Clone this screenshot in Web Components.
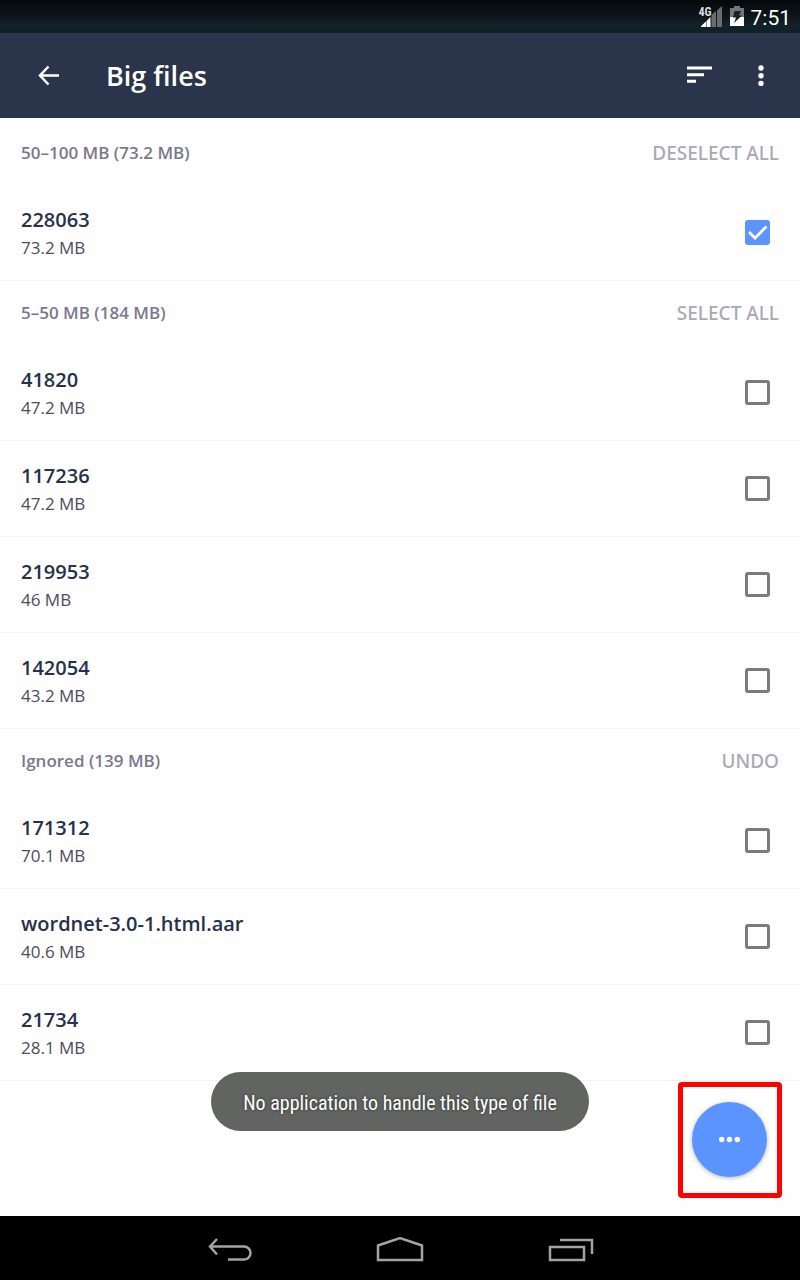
<!DOCTYPE html>
<html lang="en">
<head>
<meta charset="utf-8">
<meta name="viewport" content="width=device-width, initial-scale=1">
<title>Big files</title>
<style>
  html, body { margin: 0; background: #fefefe; }
  body { font-family: "Open Sans", "Noto Sans", sans-serif; color: #27314a; }
</style>
</head>
<body>
<big-files-app></big-files-app>

<template id="app">
  <style>
    :host { display: flex; flex-direction: column; min-height: 100vh; }
    main { position: relative; flex: 1; padding: 3px 0 0; background: #fefefe; }
    toast-message { position: absolute; left: 0; right: 0; bottom: 85px; }
    action-fab { position: absolute; right: 18px; bottom: 18px; }
  </style>
  <status-bar></status-bar>
  <app-bar>Big files</app-bar>
  <main>
    <file-section heading="50–100 MB (73.2 MB)" action="DESELECT ALL">
      <file-row name="228063" size="73.2 MB" checked></file-row>
    </file-section>
    <file-section heading="5–50 MB (184 MB)" action="SELECT ALL">
      <file-row name="41820" size="47.2 MB"></file-row>
      <file-row name="117236" size="47.2 MB"></file-row>
      <file-row name="219953" size="46 MB"></file-row>
      <file-row name="142054" size="43.2 MB"></file-row>
    </file-section>
    <file-section heading="Ignored (139 MB)" action="UNDO">
      <file-row name="171312" size="70.1 MB"></file-row>
      <file-row name="wordnet-3.0-1.html.aar" size="40.6 MB"></file-row>
      <file-row name="21734" size="28.1 MB"></file-row>
    </file-section>
    <toast-message>No application to handle this type of file</toast-message>
    <action-fab></action-fab>
  </main>
  <nav-bar></nav-bar>
</template>

<template id="status">
  <style>
    :host { display: flex; justify-content: flex-end; align-items: center; gap: 7px; height: 33px; padding-right: 9px; box-sizing: border-box;
      background: linear-gradient(#04080a, #0b1216 40%, #12212a 75%, #102128); color: #fff; font-family: Roboto, sans-serif; }
    svg { display: block; }
    .net { display: flex; position: relative; }
    .net span { position: absolute; left: 0; top: 0; font-family: "Roboto Condensed", Roboto, sans-serif; font-size: 12px; line-height: 12px; font-weight: 700; color: #ddd; }
    time { font-size: 21px; line-height: 24px; padding-top: 2px; }
  </style>
  <div class="net">
    <svg width="24" height="22" viewBox="0 0 24 22"><path d="M2 21v-1l5-4.500v5.500z" fill="#fff"/><path d="M7.500 21v-6l4-4v10z" fill="#fff"/><path d="M12.500 21V9l4.500-4v16zM18 21V4.500L23 0v21z" fill="#696d6f"/></svg>
    <span>4G</span>
  </div>
  <svg width="14" height="22" viewBox="0 0 14 22"><path d="M4 0h6v2h4v9H0V2h4z" fill="#72777a"/><path d="M0 11h14v9H0z" fill="#fff"/><path d="M4.500 5H11L9 9.500h3L4 17l2-5.500H3z" fill="#182126"/></svg>
  <time>7:51</time>
</template>

<template id="bar">
  <style>
    :host { display: flex; align-items: center; height: 85px; padding: 0 21px 0 30px; box-sizing: border-box; background: #2a344b; color: #fff; }
    h1 { flex: 1; margin: 0 0 0 40px; font-size: 27px; line-height: 36px; font-weight: 600; }
    button { display: flex; justify-content: center; align-items: center; width: 36px; height: 48px; padding: 0; border: 0; background: none; }
    .sort { margin-right: 26px; }
  </style>
  <button aria-label="Back"><svg width="24" height="24" viewBox="0 0 24 24" fill="none" stroke="#fff" stroke-width="2.500"><path d="M12.500 2.500L4 11.500l8.500 9M4 11.500h19"/></svg></button>
  <h1><slot></slot></h1>
  <button class="sort" aria-label="Sort"><svg width="26" height="20" viewBox="0 0 26 20" fill="#fff"><path d="M1 .5h25v3H1zM1 7.200h17v3H1zM1 13.700h9v3H1z"/></svg></button>
  <button aria-label="More options"><svg width="8" height="24" viewBox="0 0 8 24" fill="#fff"><circle cx="4" cy="4" r="2.700"/><circle cx="4" cy="11.700" r="2.700"/><circle cx="4" cy="19.400" r="2.700"/></svg></button>
</template>

<template id="section">
  <style>
    :host { display: block; }
    header { display: flex; justify-content: space-between; align-items: center; height: 64px; padding: 0 21px; }
    h2 { margin: 0; font-size: 17px; line-height: 24px; font-weight: 600; color: #7b788c; }
    button { border: 0; padding: 0; background: none; font: 500 19px/24px "Noto Sans", "Open Sans", sans-serif; color: #aaa8b6; }
  </style>
  <section><header><h2></h2><button></button></header><slot></slot></section>
</template>

<template id="row">
  <style>
    :host { display: block; border-bottom: 1px solid #f5f1f3; }
    label { display: flex; align-items: center; justify-content: space-between; height: 95px; padding: 0 30px 0 21px; }
    .text { display: grid; padding-top: 2px; }
    .name { font-size: 20px; line-height: 28px; font-weight: 600; color: #27314a; }
    .size { font-size: 17px; line-height: 28px; color: #4d4c5b; }
    input { appearance: none; box-sizing: border-box; width: 25px; height: 25px; margin: 0; border: 3px solid #7b7b7b; border-radius: 3px; }
    input:checked { border: 0; background: #5b94ff url("data:image/svg+xml,%3Csvg xmlns='http://www.w3.org/2000/svg' viewBox='0 0 25 25'%3E%3Cpath d='M4 12l6 6L21.500 6.500' fill='none' stroke='white' stroke-width='2.700'/%3E%3C/svg%3E") center / 25px 25px; }
  </style>
  <label><span class="text"><span class="name"></span><span class="size"></span></span><input type="checkbox"></label>
</template>

<template id="toast">
  <style>
    :host { display: flex; justify-content: center; pointer-events: none; }
    div { padding: 17px 32px 14px; border-radius: 30px; background: rgba(85, 87, 84, .92); color: #fff;
      font: 20px/28px "Roboto Condensed", Roboto, sans-serif; white-space: nowrap; text-shadow: 0 0 3px #222b24; }
  </style>
  <div role="status"><slot></slot></div>
</template>

<template id="fab">
  <style>
    :host { display: block; padding: 15px 10px 16px 9px; border: 5px solid #f00; border-radius: 4px; }
    button { display: grid; place-items: center; width: 75px; height: 75px; padding: 0; border: 0; border-radius: 50%; background: #5b94ff; box-shadow: 0 1px 4px rgba(0, 0, 0, .3); }
  </style>
  <button aria-label="More actions"><svg width="23" height="7" viewBox="0 0 23 7" fill="#fff"><circle cx="3.700" cy="3.500" r="2.700"/><circle cx="11.500" cy="3.500" r="2.700"/><circle cx="19.300" cy="3.500" r="2.700"/></svg></button>
</template>

<template id="nav">
  <style>
    :host { display: block; background: #000; }
    nav { display: flex; justify-content: center; align-items: center; gap: 124px; height: 60px; padding-top: 4px; }
    button { display: flex; padding: 0; border: 0; background: none; }
    svg { fill: none; stroke: #a3a3a3; stroke-width: 2.500; }
  </style>
  <nav aria-label="System">
    <button aria-label="Back"><svg width="48" height="28" viewBox="0 0 48 28"><path d="M13 3L6 10.500l7 8M6 10.500h34a6.500 6.500 0 0 1 0 13H24"/></svg></button>
    <button aria-label="Home"><svg width="48" height="28" viewBox="0 0 48 28"><path d="M2 24V9.500L24 2l22 7.500V24z"/></svg></button>
    <button aria-label="Recent apps"><svg width="48" height="28" viewBox="0 0 48 28"><path d="M2 11h34v13H2zM12 4h32v14"/></svg></button>
  </nav>
</template>

<script>
  class Base extends HTMLElement {
    constructor() {
      super();
      this.attachShadow({ mode: "open" }).append(document.getElementById(this.constructor.template).content.cloneNode(true));
    }
    find(selector) { return this.shadowRoot.querySelector(selector); }
  }
  class StatusBar extends Base { static template = "status"; }
  class AppBar extends Base { static template = "bar"; }
  class ToastMessage extends Base { static template = "toast"; }
  class ActionFab extends Base { static template = "fab"; }
  class NavBar extends Base { static template = "nav"; }
  class FileSection extends Base {
    static template = "section";
    connectedCallback() {
      this.find("h2").textContent = this.getAttribute("heading");
      this.find("button").textContent = this.getAttribute("action");
    }
  }
  class FileRow extends Base {
    static template = "row";
    connectedCallback() {
      this.find(".name").textContent = this.getAttribute("name");
      this.find(".size").textContent = this.getAttribute("size");
      this.find("input").checked = this.hasAttribute("checked");
    }
  }
  class BigFilesApp extends Base { static template = "app"; }
  customElements.define("status-bar", StatusBar);
  customElements.define("app-bar", AppBar);
  customElements.define("toast-message", ToastMessage);
  customElements.define("action-fab", ActionFab);
  customElements.define("nav-bar", NavBar);
  customElements.define("file-section", FileSection);
  customElements.define("file-row", FileRow);
  customElements.define("big-files-app", BigFilesApp);
</script>
</body>
</html>
